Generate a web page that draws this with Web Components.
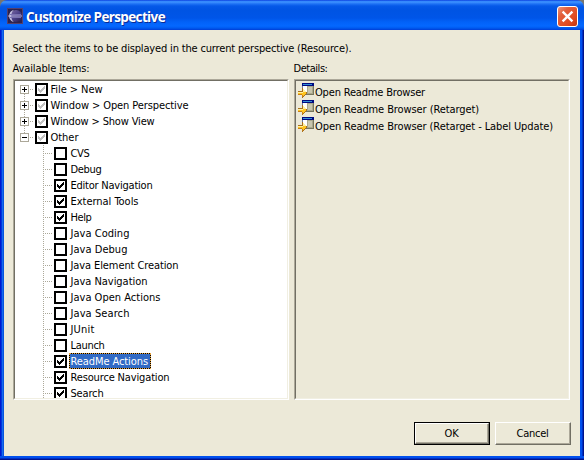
<!DOCTYPE html>
<html lang="en">
<head>
<meta charset="utf-8">
<title>Customize Perspective</title>
<style>
html,body{margin:0;width:584px;height:460px;overflow:hidden;background:#77756e}
body{font:11px/16px "DejaVu Sans Condensed","DejaVu Sans",sans-serif;font-stretch:condensed;color:#000}
</style>
</head>
<body>
<perspective-dialog></perspective-dialog>
<script>
function define(name, html, setup) {
  const t = document.createElement('template');
  t.innerHTML = html;
  customElements.define(name, class extends HTMLElement {
    connectedCallback() {
      if (this.shadowRoot) return;
      this.attachShadow({mode: 'open'}).appendChild(t.content.cloneNode(true));
      if (setup) setup.call(this, this.shadowRoot);
    }
  });
}

/* One-line label; "w" spreads the letters over a fixed advance width. */
define('fit-text', `<style>
:host{display:inline-block;white-space:nowrap;overflow:visible}
span{display:inline-block;white-space:pre}
</style><span><slot></slot></span>`, function (root) {
  const s = root.querySelector('span'), w = +this.getAttribute('w');
  const n = this.textContent.length;
  if (w) {
    s.style.letterSpacing = (w - s.getBoundingClientRect().width) / n + 'px';
    this.style.width = w + 'px';
  }
});

define('eclipse-icon', `<style>:host{display:block;width:16px;height:16px}svg{display:block}</style>
<svg width="16" height="16" viewBox="0 0 16 16">
<defs><linearGradient id="g" x1="0" y1="0" x2="1" y2="1"><stop offset="0" stop-color="#7d6ca4"/><stop offset=".5" stop-color="#4a4088"/><stop offset="1" stop-color="#241b4c"/></linearGradient></defs>
<rect width="16" height="16" fill="#54406c"/><rect x="1" y="1" width="14" height="14" fill="#2c2250"/>
<circle cx="9" cy="8" r="6" fill="url(#g)"/>
<path d="M7 1.8C.5 3.2.5 12.8 7 14.2C3.3 11.5 3.3 4.5 7 1.8Z" fill="#c5c3e4"/>
<path d="M3 6.5H14M3 9.5H14" stroke="#7770b0"/><path d="M1 8H15" stroke="#b6b1dc"/>
</svg>`);

define('close-button', `<style>
:host{display:block;width:21px;height:21px}svg{display:block}
</style><svg width="21" height="21" viewBox="0 0 21 21">
<defs><linearGradient id="r" x1="0" y1="0" x2="1" y2="1"><stop offset="0" stop-color="#f09a80"/><stop offset=".3" stop-color="#e2603c"/><stop offset=".7" stop-color="#e04a20"/><stop offset="1" stop-color="#b93410"/></linearGradient></defs>
<rect x=".5" y=".5" width="20" height="20" rx="2.5" fill="url(#r)" stroke="#fff"/>
<path d="M5.6 5.6L15.4 15.4M15.4 5.6L5.6 15.4" stroke="#fff" stroke-width="2.3"/></svg>`);

define('title-bar', `<style>
:host{display:flex;align-items:flex-start;box-sizing:border-box;height:30px;padding:6px 6px 0 7px;border-radius:7px 7px 0 0;
background:linear-gradient(#0831d9 0,#2b80fa 1px,#3f93ff 2px,#1c70f4 4px,#0559e8 6px,#0054e3 10px,#0055e8 18px,#0262f8 22px,#0468ff 26px,#005bf0 28px,#003dd7 30px)}
eclipse-icon{margin:2px 3px 0 0}
fit-text{font:bold 13.5px/20px "Open Sans","Noto Sans",sans-serif;font-stretch:normal;color:#fff;text-shadow:1px 1px #0a2a94;margin-top:1px}
.gap{flex:1}
</style><eclipse-icon></eclipse-icon><fit-text w="139">Customize Perspective</fit-text><span class="gap"></span><close-button></close-button>`);

define('check-box', `<style>
:host{display:block;box-sizing:border-box;width:13px;height:13px;border:2px solid #000;background:#fff;color:#000}
:host([state=gray]){color:#c0c0c0}
svg{display:none}
:host([state]) svg{display:block}
</style><svg width="9" height="9" viewBox="0 0 9 9" shape-rendering="crispEdges"><path fill="currentColor" d="M1 3h1v1h1v1h1v-1h1v-1h1v-1h1v-1h1v3h-1v1h-1v1h-1v1h-1v1h-1v-1h-1v-1h-1z"/></svg>`);

define('tree-item', `<style>
:host{display:flex;height:16px;align-items:center;flex:none}
.exp{width:9px;height:9px;flex:none;margin-left:5px}
.dots{height:1px;flex:none;background:repeating-linear-gradient(90deg,#aca899 0 1px,transparent 1px 2px)}
.exp svg{display:block}
check-box{flex:none}
.label{display:block;box-sizing:border-box;height:16px;padding:0 3px 0 1.5px;margin-left:2px;line-height:17px}
:host([selected]) .label{background:#316ac5;color:#fff;outline:1px dotted #e8a33c;outline-offset:-1px;box-shadow:inset 0 0 0 1px #000}
:host(:not([level="0"])) .exp{display:none}
:host([level="0"]) .dots{width:4px;margin:0 1px}
:host([level="0"]) .label{margin-left:1px}
:host([level="1"]) .dots{width:9px;margin:0 2px 0 28px}
:host([level="0"][open]) .v{display:none}
</style><div class="exp"><svg width="9" height="9" shape-rendering="crispEdges"><rect x=".5" y=".5" width="8" height="8" fill="#fff" stroke="#aca899"/><path d="M2 4.5H7" stroke="#000"/><path class="v" d="M4.5 2V7" stroke="#000"/></svg></div>
<div class="dots"></div><check-box></check-box><div class="label"><fit-text></fit-text></div>`, function (root) {
  const f = root.querySelector('fit-text'), c = root.querySelector('check-box');
  const t = document.createElement('fit-text');
  t.setAttribute('w', this.getAttribute('w'));
  t.textContent = this.getAttribute('label');
  f.replaceWith(t);
  if (this.getAttribute('check')) c.setAttribute('state', this.getAttribute('check'));
});

define('sunken-panel', `<style>
:host{display:block;box-sizing:border-box;border:1px solid;border-color:#aca899 #fff #fff #aca899;overflow:hidden}
div{box-sizing:border-box;height:100%;border:1px solid;border-color:#716f64 #f1efe2 #f1efe2 #716f64;overflow:hidden;background:var(--panel,#ece9d8)}
</style><div><slot></slot></div>`);

define('item-tree', `<style>
:host{display:flex;flex-direction:column;background:
repeating-linear-gradient(#aca899 0 1px,transparent 1px 2px) 9px 9px/1px 44px no-repeat,
repeating-linear-gradient(#aca899 0 1px,transparent 1px 2px) 28px 64px/1px 256px no-repeat}
</style><slot></slot>`, function () {
  const add = (label, w, level, check, extra) => {
    const e = document.createElement('tree-item');
    e.setAttribute('label', label); e.setAttribute('w', w); e.setAttribute('level', level);
    if (check) e.setAttribute('check', check);
    if (extra) e.setAttribute(extra, '');
    this.appendChild(e);
  };
  add('File > New', 52, 0, 'gray');
  add('Window > Open Perspective', 138, 0, 'gray');
  add('Window > Show View', 104, 0, 'gray');
  add('Other', 28, 0, 'gray', 'open');
  [['CVS',19],['Debug',31],['Editor Navigation',82,1],['External Tools',68,1],['Help',21,1],['Java Coding',59],
   ['Java Debug',57],['Java Element Creation',108],['Java Navigation',77],['Java Open Actions',90],['Java Search',59],
   ['JUnit',24],['Launch',34],['ReadMe Actions',77.5,1,'selected'],['Resource Navigation',99,1],['Search',33,1]]
    .forEach(([l, w, on, x]) => add(l, w, 1, on && 'on', x));
});

define('action-icon', `<style>:host{display:block;width:16px;height:16px;flex:none}svg{display:block}</style>
<svg width="16" height="16" viewBox="0 0 16 16" shape-rendering="crispEdges">
<rect x="4" width="12" height="12" fill="#77765e"/><rect x="4" y="3" width="11" height="8" fill="#fff"/>
<rect x="4" width="12" height="3" fill="#000a80"/><rect x="5" y="1" width="9" height="1" fill="#3290d8"/>
<rect x="4" y="3" width="1" height="5" fill="#6878a0"/>
<rect x="9" y="3" width="6" height="8" fill="#a9a78c"/><rect x="10" y="4" width="4" height="6" fill="#c8c6ae"/>
<path d="M0 8h4v-3h1v1h1v1h1v1h1v1h1v2h-1v1h-1v1h-1v1h-1v1h-1v-3h-4z" fill="#a8701c"/>
<path d="M0 9h5v-3h1v1h1v1h1v1h-8z" fill="#fff0a0"/><path d="M0 9h8v2h-1v1h-1v1h-1v1h-1v-2h-4z" fill="#ffc51e"/><path d="M0 9h5v1h-5z" fill="#fff0a0"/>
<path d="M0 11h4v1h-4zM4 12h1v2h-1z" fill="#c87f18"/>
</svg>`);

define('detail-row', `<style>
:host{display:flex;height:17px}
</style><action-icon></action-icon><slot></slot>`);

define('push-button', `<style>
:host{display:block;box-sizing:border-box;width:76px;height:23px}
div{box-sizing:border-box;height:100%;display:flex;align-items:center;justify-content:center;padding-right:1px;background:#ece9d8;border:1px solid;border-color:#fff #716f64 #716f64 #fff;box-shadow:inset -1px -1px #aca899}
:host([default]){border:1px solid #000}
</style><div><slot></slot></div>`);

define('perspective-dialog', `<style>
:host{display:flex;flex-direction:column;width:584px;height:460px}
.frame{flex:1;box-sizing:border-box;padding:0 4px 4px;background:
linear-gradient(#ece9d8,#ece9d8) 4px 0/576px 426px no-repeat,
linear-gradient(#0050ee 0 2px,#0030c4 2px 3px,#00138c 3px) 0 426px/584px 4px no-repeat,
linear-gradient(90deg,#0019cf 0 1px,#0038dd 1px 2px,#166aee 2px 3px,#0855dd 3px 4px,#ece9d8 4px 580px,#0050ee 580px 582px,#0030c4 582px 583px,#00138c 583px)}
.body{height:426px;box-sizing:border-box;padding:11px 9px 0;display:flex;flex-direction:column}
.intro{height:20px;line-height:16px;margin-left:-.5px}
.cols{display:grid;grid-template-columns:276px 276px;column-gap:5px}
.cap{height:18px;line-height:16px;margin-left:-.5px}
.col sunken-panel{height:321px}
.tree{--panel:#fff}
.details{box-sizing:border-box;padding:2px}
.details fit-text{margin:2px 0 0 1px}
u{text-decoration:underline;text-underline-offset:1px;text-decoration-thickness:1px}
.foot{display:flex;justify-content:flex-end;gap:5px;padding-top:22px}
push-button fit-text{line-height:16px}
</style>
<title-bar></title-bar>
<div class="frame"><div class="body">
<div class="intro"><fit-text w="339">Select the items to be displayed in the current perspective (Resource).</fit-text></div>
<div class="cols">
<div class="col"><div class="cap"><fit-text w="77">Available <u>I</u>tems:</fit-text></div><sunken-panel class="tree"><item-tree></item-tree></sunken-panel></div>
<div class="col"><div class="cap"><fit-text w="34">Details:</fit-text></div><sunken-panel><div class="details">
<detail-row><fit-text w="110">Open Readme Browser</fit-text></detail-row>
<detail-row><fit-text w="164">Open Readme Browser (Retarget)</fit-text></detail-row>
<detail-row><fit-text w="238">Open Readme Browser (Retarget - Label Update)</fit-text></detail-row>
</div></sunken-panel></div>
</div>
<div class="foot"><push-button default><fit-text w="14">OK</fit-text></push-button><push-button><fit-text w="32">Cancel</fit-text></push-button></div>
</div></div>`);
</script>
</body>
</html>
